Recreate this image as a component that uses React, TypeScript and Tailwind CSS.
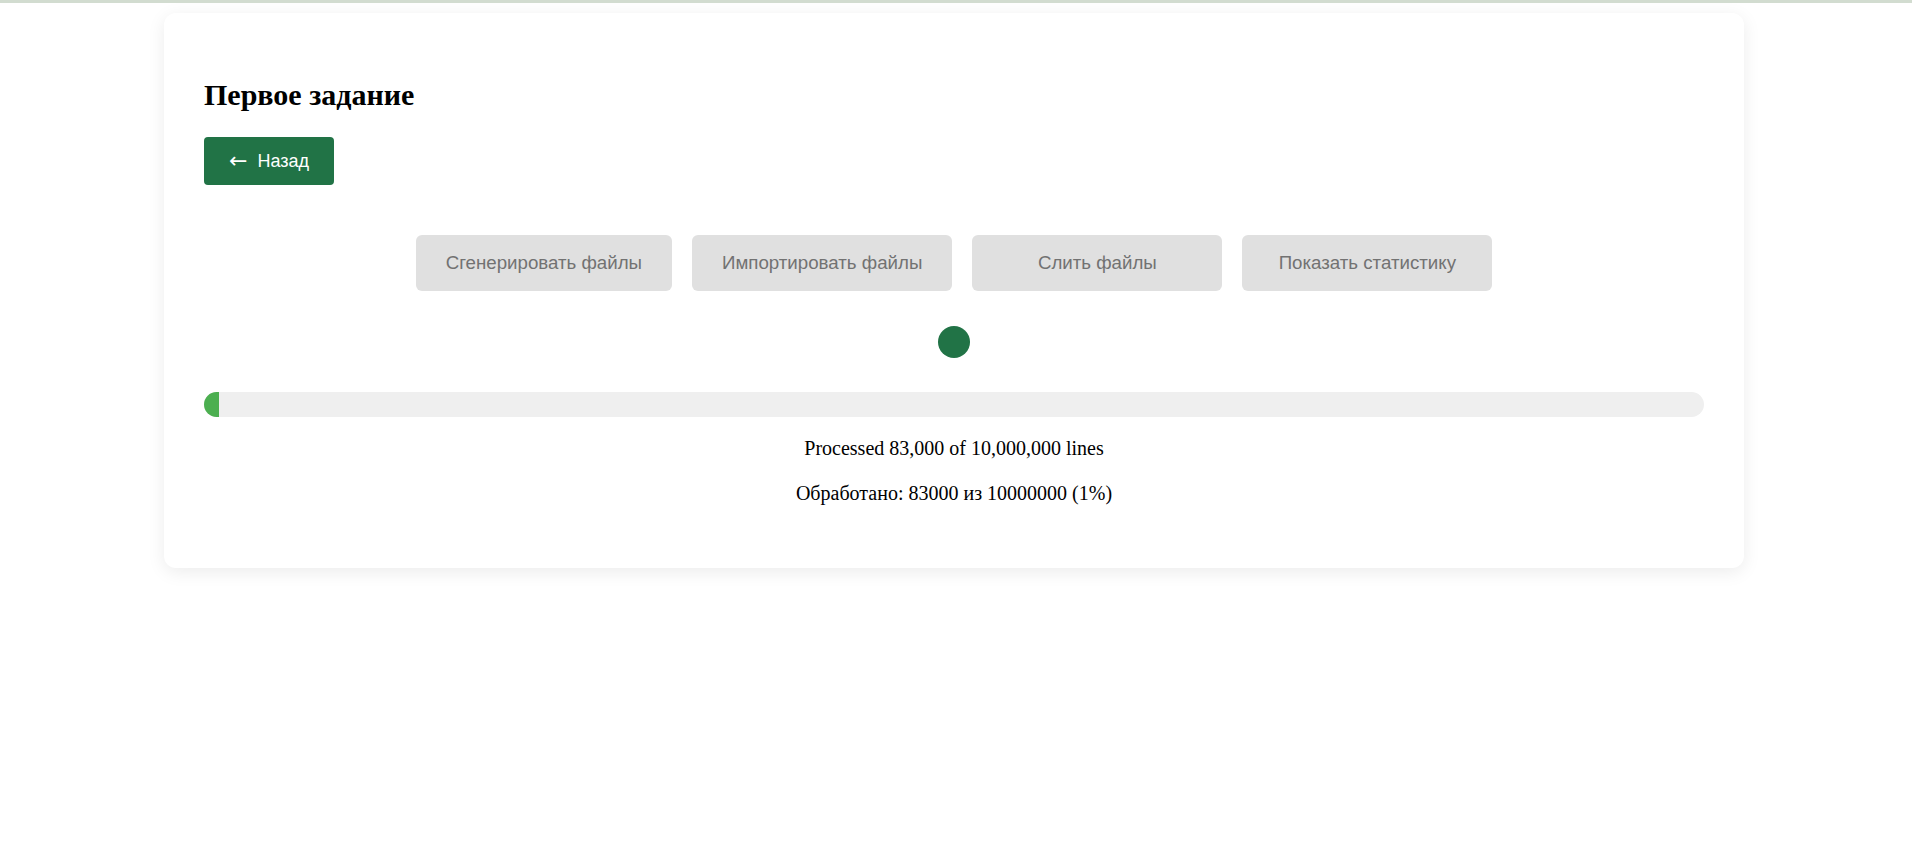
import React from "react";

const actions = [
  "Сгенерировать файлы",
  "Импортировать файлы",
  "Слить файлы",
  "Показать статистику",
];

export default function App() {
  const processed = 83000;
  const total = 10000000;
  const percent = Math.round((processed / total) * 100);

  return (
    <div className="min-h-[865px] bg-white font-['Liberation_Serif',serif] text-[20px] text-black">
      <div className="h-[3px] bg-[#d2dcd0]" />

      <div className="ml-[164px] mt-[10px] w-[1580px] rounded-[12px] bg-white px-[40px] pb-[40px] pt-[40px] shadow-[0_4px_18px_rgba(0,0,0,0.08)]">
        <h2 className="mt-[25px] text-[30px] font-bold leading-[34px]">Первое задание</h2>

        <button className="mt-[25px] flex h-[48px] items-center gap-[10px] rounded-[4px] bg-[#217346] px-[25px] font-['Liberation_Sans',Arial,sans-serif] text-[18px] text-white">
          <span className="font-['DejaVu_Sans',sans-serif] text-[22px] leading-none">←</span>
          <span>Назад</span>
        </button>

        <div className="mt-[50px] flex justify-center gap-[20px]">
          {actions.map((label) => (
            <button
              key={label}
              className="h-[56px] min-w-[250px] rounded-[6px] bg-[#e0e0e0] px-[30px] font-['Liberation_Sans',Arial,sans-serif] text-[18.7px] text-[#727272]"
            >
              {label}
            </button>
          ))}
        </div>

        <div className="mt-[35px] flex justify-center">
          <div className="h-[32px] w-[32px] rounded-full bg-[#217346]" />
        </div>

        <div className="mt-[34px] h-[25px] w-full overflow-hidden rounded-full bg-[#efefef]">
          <div className="h-full bg-[#4caf50]" style={{ width: `${percent}%` }} />
        </div>

        <p className="mt-[20px] text-center leading-[23px]">
          Processed {processed.toLocaleString("en-US")} of {total.toLocaleString("en-US")} lines
        </p>
        <p className="mt-[22px] mb-[23px] text-center leading-[23px]">
          Обработано: {processed} из {total} ({percent}%)
        </p>
      </div>
    </div>
  );
}
